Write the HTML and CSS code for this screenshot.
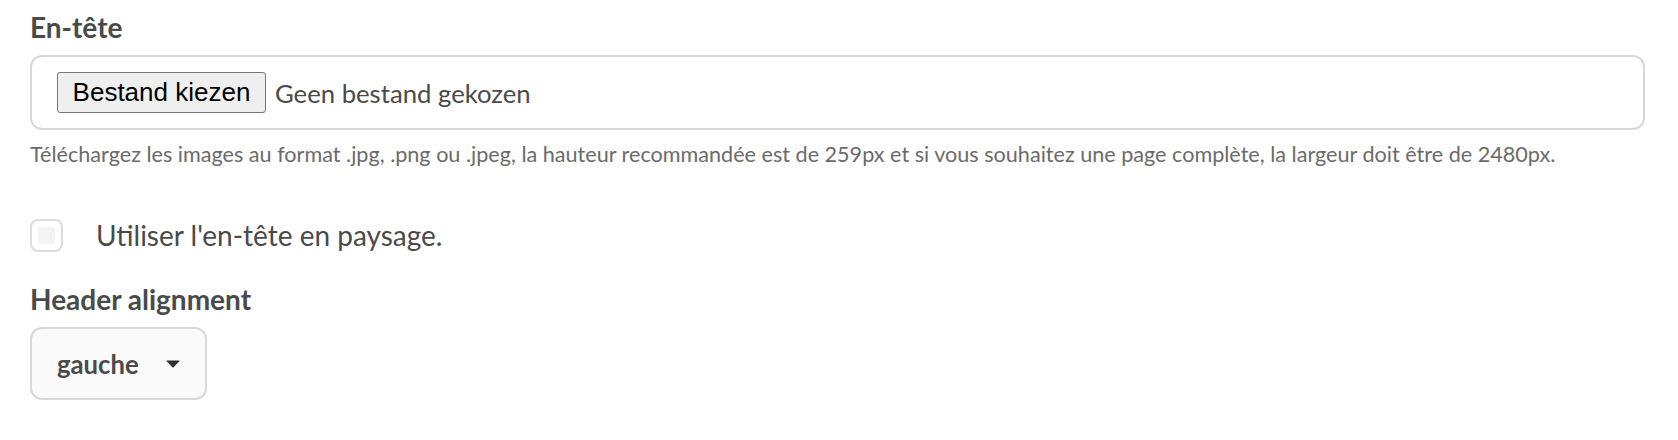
FILE: index.html
```html
<!DOCTYPE html>
<html lang="fr">
<head>
<meta charset="utf-8">
<title>En-tête</title>
<link rel="stylesheet" href="styles.css">
</head>
<body>
<div class="form">
  <div class="field">
    <label class="field-title">En-tête</label>
    <div class="file-box">
      <span class="file-btn">Bestand kiezen</span>
      <span class="file-name">Geen bestand gekozen</span>
    </div>
    <p class="help">Téléchargez les images au format .jpg, .png ou .jpeg, la hauteur recommandée est de 259px et si vous souhaitez une page complète, la largeur doit être de 2480px.</p>
  </div>
  <label class="check-row">
    <span class="check"><span class="check-inner"></span></span>
    <span class="check-label">Utiliser l'en-tête en paysage.</span>
  </label>
  <div class="field">
    <label class="field-title">Header alignment</label>
    <div class="select">
      <span class="select-value">gauche</span>
      <svg class="caret" width="14" height="8" viewBox="0 0 14 8"><path d="M0.8 0.6 H13.2 Q13.8 0.6 13.3 1.2 L7.6 7.3 Q7 7.9 6.4 7.3 L0.7 1.2 Q0.2 0.6 0.8 0.6 Z" fill="#2f2f2f"/></svg>
    </div>
  </div>
</div>
</body>
</html>
```

FILE: styles.css
```css
html, body {
  margin: 0;
  padding: 0;
  background: #ffffff;
}
body {
  font-family: Lato, "Open Sans", sans-serif;
  color: #4a4a4a;
}
.form {
  padding: 10px 33px 0 30px;
}
.field-title {
  display: block;
  font-weight: 700;
  font-size: 28px;
  line-height: 34px;
  color: #4a4a4a;
  margin-bottom: 11px;
}
.file-box {
  box-sizing: border-box;
  height: 75px;
  border: 2px solid #d8d8d8;
  border-radius: 12px;
  display: flex;
  align-items: center;
  padding-left: 25px;
}
.file-btn {
  box-sizing: border-box;
  height: 41px;
  width: 209px;
  display: flex;
  align-items: center;
  justify-content: center;
  font-family: "Liberation Sans", Arial, sans-serif;
  font-size: 26px;
  color: #000;
  background: #efefef;
  border: 1px solid #767676;
  border-radius: 3px;
}
.file-name {
  margin-left: 9px;
  font-size: 25.7px;
  color: #4a4a4a;
}
.help {
  margin: 11px 0 0;
  font-size: 21.6px;
  line-height: 26px;
  color: #6b6b6b;
  white-space: nowrap;
}
.check-row {
  display: flex;
  align-items: center;
  margin-top: 51px;
}
.check {
  box-sizing: border-box;
  width: 33px;
  height: 33px;
  border: 2px solid #dcdcdc;
  border-radius: 8px;
  background: #fff;
  display: flex;
  align-items: center;
  justify-content: center;
}
.check-inner {
  width: 17px;
  height: 17px;
  background: #f4f4f4;
  border-radius: 2px;
}
.check-label {
  margin-left: 33px;
  font-size: 28px;
  line-height: 34px;
  color: #4a4a4a;
}
.check-row + .field {
  margin-top: 30px;
}
.select {
  box-sizing: border-box;
  width: 177px;
  height: 73px;
  border: 2px solid #d8d8d8;
  border-radius: 12px;
  background: #fafafa;
  display: flex;
  align-items: center;
  padding-left: 25px;
}
.select-value {
  font-weight: 700;
  font-size: 25.7px;
  color: #4a4a4a;
}
.caret {
  margin-left: 27px;
}
```
